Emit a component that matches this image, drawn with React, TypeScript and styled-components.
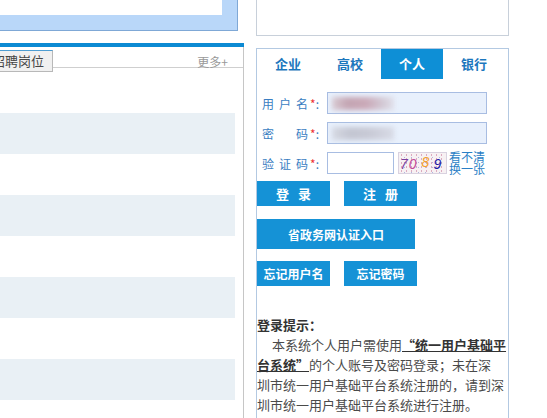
import React from 'react';
import styled, { createGlobalStyle } from 'styled-components';

const GlobalStyle = createGlobalStyle`
  *, *::before, *::after { box-sizing: border-box; }
  html, body {
    margin: 0;
    padding: 0;
    background: #fff;
    overflow: hidden;
    font-family: 'Noto Sans CJK SC', 'Noto Sans', sans-serif;
  }
`;

const Page = styled.div`
  width: 547px;
  height: 418px;
  display: flex;
  align-items: flex-start;
  gap: 12px;
  overflow: hidden;
`;

/* ---------- left column ---------- */

const LeftCol = styled.div`
  width: 244px;
  height: 418px;
  flex-shrink: 0;
  display: flex;
  flex-direction: column;
  overflow: hidden;
`;

const Banner = styled.div`
  flex-shrink: 0;
  width: 238px;
  height: 31px;
  background: #b9d7f9;
  border-right: 1px solid #7fa8d6;
  border-bottom: 1px solid #7fa8d6;
`;

const BannerInner = styled.div`
  width: 222px;
  height: 15px;
  background: #fff;
`;

const Bar = styled.div`
  flex-shrink: 0;
  margin-top: 12px;
  height: 4px;
  background: #0c8ad3;
`;

const NewsPanel = styled.div`
  flex: 1;
  min-height: 0;
  overflow: hidden;
  border-right: 1px solid #c6c6c6;
`;

const NewsHead = styled.div`
  height: 21px;
  display: flex;
  justify-content: space-between;
  align-items: flex-start;
  border-bottom: 1px solid #cfcfcf;
`;

const NewsTab = styled.div`
  flex-shrink: 0;
  margin-top: 3px;
  margin-left: -10px;
  width: 63px;
  height: 22px;
  padding-left: 1px;
  background: #f0f0f0;
  border: 1px solid #b8b8b8;
  border-top-color: #4d9dd2;
  color: #444;
  font-size: 13px;
  line-height: 20px;
  white-space: nowrap;
  overflow: hidden;
`;

const More = styled.a`
  margin-top: 7px;
  margin-right: 15px;
  font-size: 12px;
  line-height: 16px;
  color: #999;
  text-decoration: none;
`;

const NewsList = styled.div`
  margin-top: 4px;
`;

const NewsRow = styled.div<{ $shade: boolean }>`
  height: 41px;
  margin-right: 8px;
  background: ${p => (p.$shade ? '#e9f0f5' : '#fff')};
`;

/* ---------- right column ---------- */

const RightCol = styled.div`
  width: 253px;
  flex-shrink: 0;
  display: flex;
  flex-direction: column;
`;

const TopBox = styled.div`
  flex-shrink: 0;
  height: 36px;
  border: 1px solid #c8d0da;
  border-top: none;
`;

const LoginPanel = styled.div`
  flex-shrink: 0;
  margin-top: 12px;
  height: 400px;
  border: 1px solid #b3c9e2;
`;

const TypeTabs = styled.div`
  display: flex;
  height: 30px;
`;

const TypeTab = styled.div<{ $active?: boolean }>`
  width: 62px;
  height: 30px;
  line-height: 30px;
  text-align: center;
  font-size: 13px;
  font-weight: bold;
  color: ${p => (p.$active ? '#fff' : '#1c77bd')};
  background: ${p => (p.$active ? '#0e8fd6' : 'transparent')};
`;

const Form = styled.div`
  padding-top: 13px;
`;

const FieldRow = styled.div`
  display: flex;
  align-items: center;
  height: 22px;
  margin-bottom: 8px;
`;

const Label = styled.div`
  width: 70px;
  padding-left: 5px;
  font-size: 12px;
  color: #3a7ec2;
  white-space: nowrap;
`;

const LabelName = styled.span`
  letter-spacing: 5px;
  margin-right: -3px;
`;

const Star = styled.span`
  color: #e33;
`;

const FakeInput = styled.div<{ $w: number; $filled?: boolean }>`
  width: ${p => p.$w}px;
  height: 22px;
  display: flex;
  align-items: center;
  background: ${p => (p.$filled ? '#e8f0fc' : '#fff')};
  border: 1px solid #a8bde2;
`;

const Blur = styled.span<{ $tone: string }>`
  display: block;
  width: 62px;
  height: 13px;
  margin-left: 4px;
  background: ${p => p.$tone};
  filter: blur(2.5px);
`;

const Captcha = styled.div`
  margin-left: 4px;
  width: 49px;
  height: 22px;
  border: 1px solid #d9d2e0;
  background-color: #f7f1f3;
  background-image: radial-gradient(#d8a0b8 0.6px, transparent 0.8px),
    radial-gradient(#b0b8e0 0.6px, transparent 0.8px);
  background-size: 5px 4px, 7px 5px;
  background-position: 0 0, 2px 2px;
  display: flex;
  align-items: flex-end;
  padding-left: 1px;
  padding-bottom: 1px;
  overflow: hidden;
  font-family: 'Liberation Sans', sans-serif;
  font-style: italic;
  font-size: 14px;
  line-height: 16px;
`;

const Digit = styled.span<{ $c: string; $lift?: number; $gap?: number }>`
  color: ${p => p.$c};
  margin-right: ${p => p.$gap ?? 0}px;
  transform: translateY(${p => -(p.$lift ?? 0)}px);
`;

const Refresh = styled.a`
  margin-left: 2px;
  display: flex;
  flex-direction: column;
  font-size: 12px;
  line-height: 12px;
  color: #2b7fc6;
  text-decoration: none;
  white-space: nowrap;
`;

const BtnRow = styled.div<{ $top: number }>`
  display: flex;
  gap: 14px;
  margin-top: ${p => p.$top}px;
`;

const Button = styled.button<{ $wide?: boolean; $spaced?: boolean }>`
  width: ${p => (p.$wide ? 158 : 73)}px;
  height: ${p => (p.$wide ? 30 : 25)}px;
  padding: 0;
  border: none;
  background: #1592d6;
  color: #fff;
  font-family: inherit;
  font-weight: bold;
  font-size: ${p => (p.$spaced ? 13 : 12)}px;
  letter-spacing: ${p => (p.$spaced ? 9 : 0)}px;
  text-indent: ${p => (p.$spaced ? 9 : 0)}px;
  cursor: pointer;
`;

const Tips = styled.div`
  margin-top: 29px;
  font-size: 13px;
  line-height: 20px;
  color: #4a4a4a;
  width: 251px;
`;

const TipsTitle = styled.div`
  font-weight: bold;
  color: #333;
`;

const TipsText = styled.p`
  margin: 0;
  text-indent: 15px;
`;

const Strong = styled.a`
  font-weight: bold;
  color: #333;
  text-decoration: underline;
`;

const App: React.FC = () => {
  const rows = Array.from({ length: 9 }, (_, i) => i % 2 === 1);

  return (
    <>
      <GlobalStyle />
      <Page>
        <LeftCol>
          <Banner>
            <BannerInner />
          </Banner>
          <Bar />
          <NewsPanel>
            <NewsHead>
              <NewsTab>招聘岗位</NewsTab>
              <More href="#">更多+</More>
            </NewsHead>
            <NewsList>
              {rows.map((shade, i) => (
                <NewsRow key={i} $shade={shade} />
              ))}
            </NewsList>
          </NewsPanel>
        </LeftCol>

        <RightCol>
          <TopBox />
          <LoginPanel>
            <TypeTabs>
              <TypeTab>企业</TypeTab>
              <TypeTab>高校</TypeTab>
              <TypeTab $active>个人</TypeTab>
              <TypeTab>银行</TypeTab>
            </TypeTabs>

            <Form>
              <FieldRow>
                <Label>
                  <LabelName>用户名</LabelName>
                  <Star>*</Star>:
                </Label>
                <FakeInput $w={160} $filled>
                  <Blur $tone="linear-gradient(90deg, #d9ccd4, #c4a5b3 25%, #caa9b8 55%, #d2c7d3 80%, #e0e0ea)" />
                </FakeInput>
              </FieldRow>
              <FieldRow>
                <Label>
                  <LabelName>密　码</LabelName>
                  <Star>*</Star>:
                </Label>
                <FakeInput $w={160} $filled>
                  <Blur $tone="linear-gradient(90deg, #d6d9e3, #c3c6d2 30%, #c8cad6 60%, #d8dbe6)" />
                </FakeInput>
              </FieldRow>
              <FieldRow>
                <Label>
                  <LabelName>验证码</LabelName>
                  <Star>*</Star>:
                </Label>
                <FakeInput $w={67} />
                <Captcha>
                  <Digit $c="#7b3f9e" $gap={1}>7</Digit>
                  <Digit $c="#c04a9a" $gap={5}>0</Digit>
                  <Digit $c="#f3a12e" $lift={2} $gap={4}>8</Digit>
                  <Digit $c="#1b1ba8">9</Digit>
                </Captcha>
                <Refresh href="#">
                  <span>看不清</span>
                  <span>换一张</span>
                </Refresh>
              </FieldRow>

              <BtnRow $top={-1}>
                <Button $spaced>登录</Button>
                <Button $spaced>注册</Button>
              </BtnRow>
              <BtnRow $top={13}>
                <Button $wide>省政务网认证入口</Button>
              </BtnRow>
              <BtnRow $top={12}>
                <Button>忘记用户名</Button>
                <Button>忘记密码</Button>
              </BtnRow>

              <Tips>
                <TipsTitle>登录提示：</TipsTitle>
                <TipsText>
                  本系统个人用户需使用<Strong href="#">“统一用户基础平台系统”</Strong>的个人账号及密码登录；未在深
                  <br />
                  圳市统一用户基础平台系统注册的，请到深
                  <br />
                  圳市统一用户基础平台系统进行注册。
                </TipsText>
              </Tips>
            </Form>
          </LoginPanel>
        </RightCol>
      </Page>
    </>
  );
};

export default App;
